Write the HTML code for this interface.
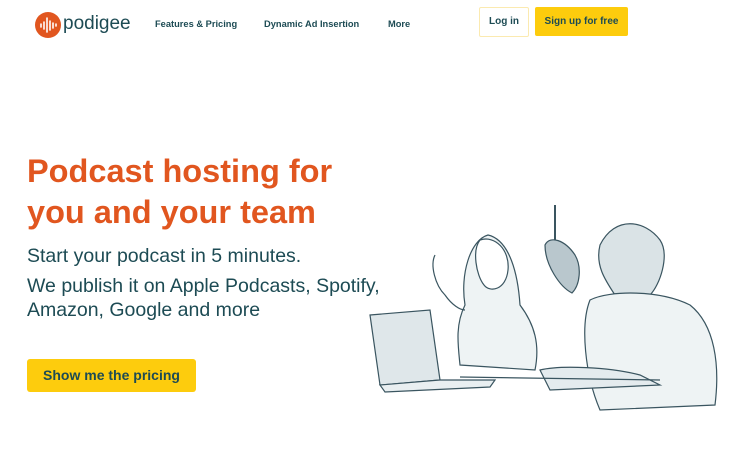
<!DOCTYPE html>
<html><head><meta charset="utf-8"><style>
body{margin:0;width:750px;height:468px;background:#fff;font-family:"Liberation Sans",sans-serif;position:relative;overflow:hidden;color:#1d4b54}
.a{position:absolute;white-space:nowrap}
.nav{font-size:9.3px;font-weight:bold;top:19px;color:#1d4b54}
h1{position:absolute;left:27px;top:151px;margin:0;font-size:32.5px;line-height:41px;color:#e1561f;font-weight:bold}
.sub{left:27px;font-size:19.5px;line-height:24px}
</style></head><body>
<svg class="a" style="left:35px;top:12px" width="26" height="26" viewBox="0 0 26 26"><circle cx="13" cy="13" r="13" fill="#e1561f"/><g stroke="#fff" stroke-width="1.6" stroke-linecap="round"><line x1="6" y1="12" x2="6" y2="15"/><line x1="9" y1="10" x2="9" y2="17"/><line x1="12" y1="6" x2="12" y2="20"/><line x1="15" y1="9" x2="15" y2="18"/><line x1="18" y1="11" x2="18" y2="16"/><line x1="21" y1="12" x2="21" y2="14"/></g></svg>
<div class="a" style="left:63px;top:13px;font-size:19px;color:#1d4b54">podigee</div>
<div class="a nav" style="left:155px">Features &amp; Pricing</div>
<div class="a nav" style="left:264px">Dynamic Ad Insertion</div>
<div class="a nav" style="left:388px">More</div>
<div class="a" style="left:479px;top:7px;width:48px;height:28px;border:1px solid #fbeab0;border-radius:2px;font-size:10px;font-weight:bold;text-align:center;line-height:28px">Log in</div>
<div class="a" style="left:535px;top:7px;width:93px;height:29px;background:#fdcc0d;border-radius:2px;font-size:10px;font-weight:bold;text-align:center;line-height:29px">Sign up for free</div>
<h1>Podcast hosting for<br>you and your team</h1>
<div class="a sub" style="top:244px">Start your podcast in 5 minutes.</div>
<div class="a sub" style="top:274px">We publish it on Apple Podcasts, Spotify,<br>Amazon, Google and more</div>
<div class="a" style="left:27px;top:359px;width:169px;height:33px;background:#fdcc0d;border-radius:3px;font-size:14px;font-weight:bold;text-align:center;line-height:33px">Show me the pricing</div>
<svg class="a" style="left:360px;top:195px" width="370" height="225" viewBox="0 0 370 225" fill="none" stroke="#3a5560" stroke-width="1.2">
<path d="M10 120 L70 115 L80 185 L20 190 Z" fill="#dfe7ea"/>
<path d="M20 190 L80 185 L135 185 L130 192 L25 197 Z" fill="#e9eff1"/>
<path d="M128 40 C110 45 100 80 105 110 C95 130 98 150 100 170 L175 175 C180 150 175 130 160 110 C158 80 150 45 128 40 Z" fill="#eef3f4"/>
<path d="M120 45 C135 40 150 55 148 75 C146 95 130 98 124 90 C116 80 112 55 120 45Z" fill="#fff"/>
<path d="M75 60 C70 70 75 90 85 100 C92 110 100 115 105 115" />
<path d="M195 10 L195 45" stroke-width="2"/>
<path d="M185 50 C190 40 205 45 215 60 C222 72 220 90 212 98 C200 92 185 70 185 50Z" fill="#b9c7cd"/>
<path d="M240 50 C255 20 285 25 300 45 C310 60 300 90 290 100 L255 100 C245 85 235 70 240 50Z" fill="#dae3e6"/>
<path d="M230 105 C250 95 300 95 330 110 C355 130 360 170 355 210 L240 215 C225 180 220 130 230 105Z" fill="#eef3f4"/>
<path d="M180 175 C200 170 250 172 280 180 L300 190 L190 195 Z" fill="#e4ebee"/>
<path d="M100 182 L300 185"/>
</svg>
</body></html>
